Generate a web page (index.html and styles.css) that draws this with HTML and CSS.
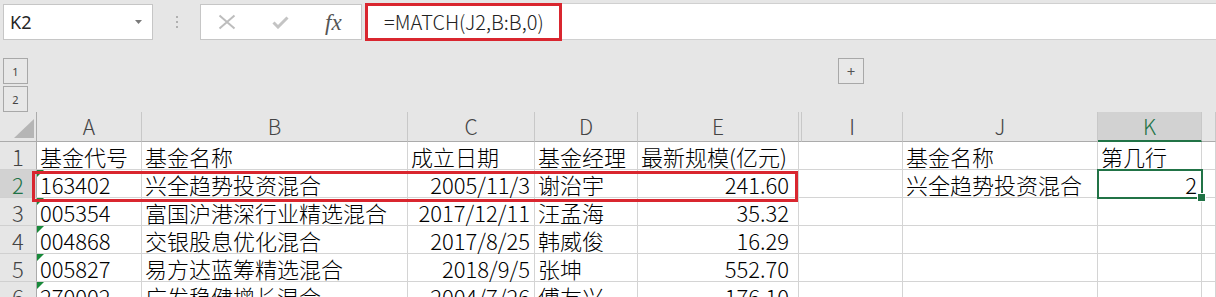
FILE: index.html
```html
<!DOCTYPE html>
<html lang="zh-CN">
<head>
<meta charset="utf-8">
<title>MATCH</title>
<link rel="stylesheet" href="styles.css">
</head>
<body>
<div class="fbar">
  <div class="namebox">
    <span class="ref">K2</span>
    <svg class="caret" width="7" height="4" viewBox="0 0 7 4"><path d="M0 0H7L3.5 4Z" fill="#7a7a7a"/></svg>
  </div>
  <div class="grip"><i></i><i></i><i></i></div>
  <div class="tools">
    <svg class="ic-x" width="18" height="16" viewBox="0 0 18 16"><path d="M1.5 1.5L16.5 14.5M16.5 1.5L1.5 14.5" stroke="#bdbdbd" stroke-width="2" fill="none"/></svg>
    <svg class="ic-ok" width="17" height="13" viewBox="0 0 17 13"><path d="M1.5 6.5L6 11L15.5 1.5" stroke="#c4c4c4" stroke-width="3" fill="none"/></svg>
    <span class="fx">fx</span>
  </div>
  <div class="finput"><span class="formula">=MATCH(J2,B:B,0)</span></div>
</div>

<div class="outline">
  <div class="levels"><span class="lvl">1</span><span class="lvl">2</span></div>
  <span class="plus">+</span>
</div>

<div class="sheet">
  <div class="grid">
    <div class="corner"><svg width="20" height="19" viewBox="0 0 20 19"><path d="M20 0V19H0Z" fill="#b5b5b5"/></svg></div>
    <div class="ch">A</div><div class="ch">B</div><div class="ch">C</div><div class="ch">D</div><div class="ch">E</div><div class="ch hid"></div><div class="ch">I</div><div class="ch">J</div><div class="ch cur">K</div><div class="ch"></div>

    <div class="rh">1</div>
    <div class="c">基金代号</div><div class="c">基金名称</div><div class="c">成立日期</div><div class="c">基金经理</div><div class="c">最新规模(亿元)</div><div class="c hid"></div><div class="c"></div><div class="c">基金名称</div><div class="c">第几行</div><div class="c"></div>

    <div class="rh cur">2</div>
    <div class="c tri">163402</div><div class="c">兴全趋势投资混合</div><div class="c r">2005/11/3</div><div class="c">谢治宇</div><div class="c r e">241.60</div><div class="c hid"></div><div class="c"></div><div class="c">兴全趋势投资混合</div><div class="c r">2</div><div class="c"></div>

    <div class="rh">3</div>
    <div class="c tri">005354</div><div class="c">富国沪港深行业精选混合</div><div class="c r">2017/12/11</div><div class="c">汪孟海</div><div class="c r e">35.32</div><div class="c hid"></div><div class="c"></div><div class="c"></div><div class="c"></div><div class="c"></div>

    <div class="rh">4</div>
    <div class="c tri">004868</div><div class="c">交银股息优化混合</div><div class="c r">2017/8/25</div><div class="c">韩威俊</div><div class="c r e">16.29</div><div class="c hid"></div><div class="c"></div><div class="c"></div><div class="c"></div><div class="c"></div>

    <div class="rh">5</div>
    <div class="c tri">005827</div><div class="c">易方达蓝筹精选混合</div><div class="c r">2018/9/5</div><div class="c">张坤</div><div class="c r e">552.70</div><div class="c hid"></div><div class="c"></div><div class="c"></div><div class="c"></div><div class="c"></div>

    <div class="rh">6</div>
    <div class="c tri">270002</div><div class="c">广发稳健增长混合</div><div class="c r">2004/7/26</div><div class="c">傅友兴</div><div class="c r e">176.10</div><div class="c hid"></div><div class="c"></div><div class="c"></div><div class="c"></div><div class="c"></div>
  </div>
  <div class="hl-row"></div>
  <div class="sel"></div>
</div>
</body>
</html>
```

FILE: styles.css
```css
* { box-sizing: border-box; margin: 0; padding: 0; }
html, body { width: 1216px; height: 297px; overflow: hidden; }
body {
  background: #e6e6e6;
  font-family: "Noto Sans CJK SC", "Noto Sans", sans-serif;
  color: #000;
}

/* formula bar */
.fbar { display: flex; align-items: flex-start; height: 44px; padding-top: 4px; }
.namebox {
  margin-left: 3px; width: 150px; height: 36px;
  background: #fff; border: 1px solid #c6c6c6;
  display: flex; align-items: center; justify-content: space-between;
  padding: 0 10px 0 6px;
}
.ref { font-family: "Noto Sans", sans-serif; font-size: 18px; color: #262626; line-height: 1; }
.caret { display: block; }
.grip { width: 47px; height: 36px; display: flex; flex-direction: column; align-items: center; justify-content: center; gap: 3px; }
.grip i { display: block; width: 2px; height: 2px; background: #b0b0b0; }
.tools {
  width: 162px; height: 36px; background: #fff; border: 1px solid #c6c6c6;
  display: flex; align-items: center;
}
.ic-x { margin-left: 17px; }
.ic-ok { margin-left: 36px; }
.fx {
  margin-left: 36px; font-family: "Liberation Serif", "DejaVu Serif", serif;
  font-style: italic; font-size: 23px; color: #555; line-height: 1;
}
.finput {
  margin-left: 3px; flex: 1; height: 37px; background: #fff;
  border-top: 1px solid #d0d0d0; border-bottom: 1px solid #d0d0d0;
  margin-top: -1px;
}
.formula {
  display: block; width: 197px; height: 38px; margin-top: -1px;
  border: 3px solid #d9262f; padding-left: 16px;
  font-size: 20px; line-height: 31px; color: #222; font-weight: 300;
}

/* outline */
.outline { display: flex; align-items: flex-start; height: 68px; padding-top: 14px; }
.levels { margin-left: 3px; display: flex; flex-direction: column; gap: 2px; }
.lvl, .plus {
  display: flex; align-items: center; justify-content: center;
  width: 25px; height: 26px; border: 1px solid #a8a8a8; background: #e8e8e8;
  font-family: "Noto Sans", sans-serif; font-size: 11px; color: #444;
}
.plus { margin-left: 810px; width: 26px; font-size: 15px; color: #555; }

/* sheet */
.sheet { position: relative; background: #fff; }
.grid {
  display: grid;
  grid-template-columns: 37px 105px 266px 127px 103px 161px 3px 101px 195px 104px 14px;
  grid-template-rows: 30px repeat(6, 28px);
}
.corner { background: #e6e6e6; border-right: 1px solid #ababab; border-bottom: 1px solid #ababab; display: flex; align-items: flex-end; justify-content: flex-end; padding: 0 2px 3px 0; }
.corner svg { display: block; }
.ch {
  background: #e6e6e6; border-right: 1px solid #c8c8c8; border-bottom: 1px solid #ababab;
  text-align: center; font-size: 21px; line-height: 29px; color: #444; font-weight: 300;
}
.ch.cur { background: #d2d2d2; color: #217346; border-bottom: 2px solid #217346; line-height: 28px; }
.rh {
  background: #e6e6e6; border-right: 1px solid #ababab; border-bottom: 1px solid #d0d0d0;
  text-align: center; font-size: 22px; line-height: 25px; color: #444; padding-top: 2px; font-weight: 300;
}
.rh.cur { background: #d2d2d2; color: #217346; }
.c {
  position: relative; border-right: 1px solid #d4d4d4; border-bottom: 1px solid #d4d4d4;
  font-size: 22px; line-height: 25px; padding: 2px 3px 0 3px; white-space: nowrap;
  color: #000; font-weight: 300;
}
.c.r { text-align: right; padding-right: 4px; }
.c.e { padding-right: 9px; }
.c.hid { border-right: none; padding: 0; }
.tri::before {
  content: ""; position: absolute; left: 0; top: 0;
  border-top: 7px solid #18893a; border-right: 7px solid transparent;
}

/* overlays */
.hl-row { position: absolute; left: 32px; top: 59px; width: 766px; height: 31px; border: 3px solid #d9262f; }
.sel { position: absolute; left: 1097px; top: 57px; width: 106px; height: 30px; border: 2px solid #217346; }
.sel::after {
  content: ""; position: absolute; right: -5px; bottom: -5px; width: 7px; height: 7px;
  background: #217346; border: 1px solid #fff;
}
```
